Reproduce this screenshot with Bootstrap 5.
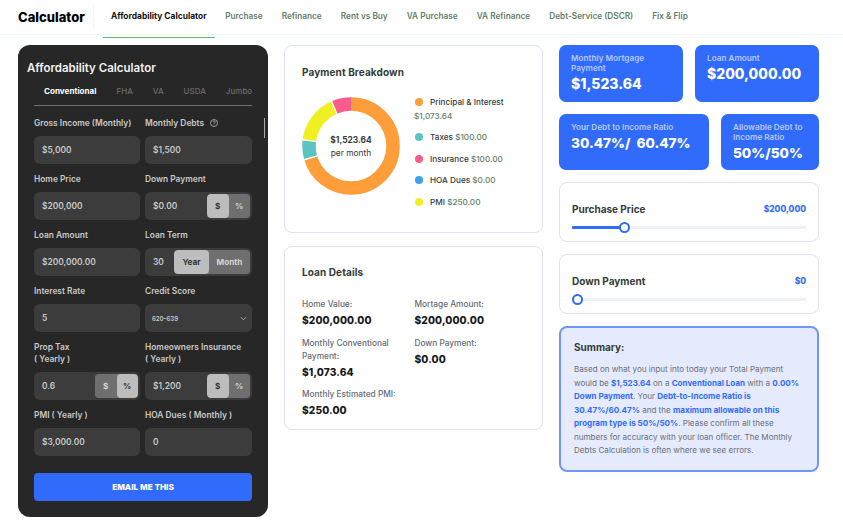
<!DOCTYPE html>
<html lang="en">
<head>
<meta charset="utf-8">
<title>Calculator</title>
<link rel="stylesheet" href="https://cdn.jsdelivr.net/npm/bootstrap@5.3.0/dist/css/bootstrap.min.css">
<style>
html,body{height:530px;overflow:hidden}
body{font-family:Inter,"Liberation Sans",sans-serif;background:#fff;color:#333c38}
.topbar{height:35px;border-bottom:1px solid #eefaf0;padding-left:18px}
.brand-name{width:75px;height:25px;margin-top:5px;font-size:13px;font-weight:800;color:#000;line-height:25px;border-right:1px solid #eefaf0;box-sizing:content-box;padding-right:0}
.tabs-top{margin-left:9px;gap:2px;flex-wrap:nowrap}
.tabs-top .nav-link{height:38px;padding:0 8.5px;line-height:33px;font-size:8.25px;font-weight:600;color:#5f8167;white-space:nowrap}
.tabs-top .nav-link.active{color:#111;font-weight:700;border-bottom:1px solid #62bd72;padding:0 8px;font-size:8.42px}
.page{padding:10px 24px 0 18px;gap:16px}
.dark-panel{width:250px;height:472px;background:#272727;border-radius:12px;padding:15px 16px 16px;color:#ddd}
.dark-title{font-size:11.5px;font-weight:600;color:#f3f3f3;line-height:17px;margin:0 0 0 -7px}
.type-tabs{height:28px;margin-top:1px;margin-bottom:11px;border-bottom:1px solid #717171;flex-wrap:nowrap;overflow:hidden;position:relative}
.type-tabs .nav-link{padding:0 10px;line-height:26px;height:27px;font-size:8px;font-weight:500;color:#6c6c6c;white-space:nowrap}
.type-tabs .nav-item:last-child .nav-link{padding-right:0}
.type-tabs .nav-link.active{color:#fff;font-weight:700;border-bottom:1px solid #316bfb;padding:0 10px;height:28px;font-size:8.1px}
.field-grid{display:grid;grid-template-columns:106px 107px;column-gap:5px;row-gap:9px}
.f-label{display:block;font-size:8.4px;line-height:12px;font-weight:600;color:#c9c9c9;margin-bottom:7px;white-space:nowrap}
.f-box{height:28px;background:#3c3c3c;border-radius:6px;padding:2px;align-items:center}
.f-box .form-control{background:transparent;border:0;box-shadow:none;color:#c9c9c9;padding:0 0 0 6px;font-size:8.4px;font-weight:600;height:24px;min-width:0;border-radius:0}
.toggles{flex:none;height:24px;border-radius:4px;overflow:hidden;background:#6f6f6f}
.toggles .btn{border:0;border-radius:4px;padding:0;height:24px;font-size:8.2px;font-weight:700;color:#d5d5d5;background:#6f6f6f;line-height:24px}
.toggles .btn.on{background:#bdbdbd;color:#333}
.tg-s{width:21.5px}
.tg-w{width:35px}
.tg-m{width:41px}
.pick{font-size:6px!important;background-color:#3c3c3c!important;border:0;box-shadow:none;color:#c9c9c9;font-weight:600;height:28px;padding:0 0 0 7px;border-radius:6px;background-position:right 5px center;background-size:7px 7px;background-image:url("data:image/svg+xml,%3csvg xmlns='http://www.w3.org/2000/svg' viewBox='0 0 16 16'%3e%3cpath fill='none' stroke='%23ddd' stroke-width='1.6' d='M2 5l6 6 6-6'/%3e%3c/svg%3e")}
.mail-btn{display:block;width:100%;height:28px;margin-top:17px;background:#316bfb;border:0;border-radius:4px;color:#fff;font-size:8.2px;font-weight:800;padding:0}
.scroll-mark{position:absolute;left:246px;top:73px;width:1px;height:20px;background:#aaa}
.mid-col{width:259px}
.soft-card{border:1px solid #dfe3f3;border-radius:8px;background:#fff}
.pay-card{height:188px;padding:19px 17px}
.details-card{height:184px;margin-top:13px;padding:18px 17px}
.card-head{font-size:10px;font-weight:700;line-height:14px;color:#333c38;letter-spacing:.1px;margin:0}
.donut-wrap{width:98px;height:98px;position:relative;margin-top:18px;flex:none}
.donut-mid{position:absolute;inset:0;text-align:center;padding-top:36.5px;font-size:8.4px;line-height:13.5px;color:#333c38}
.donut-mid b{display:block;font-weight:700}
.legend{margin:16px 0 0 15px;padding:0;list-style:none;font-size:8.2px;font-weight:500;color:#333c38}
.legend li{line-height:14px;margin-bottom:7.4px;white-space:nowrap}
.legend span{color:#5f8167}
.dot{display:inline-block;width:8px;height:8px;border-radius:50%;margin-right:7px;vertical-align:-1px}
.amount-row{display:block;margin-left:-1px;line-height:14px}
.details-grid{display:grid;grid-template-columns:112.5px 1fr;margin-top:19px;row-gap:9.5px}
.d-cap{font-size:8.3px;line-height:13px;color:#666c75;font-weight:500}
.d-val{font-size:10.2px;line-height:14px;font-weight:800;color:#18191b;margin-top:2px;letter-spacing:.1px}
.right-col{width:260px}
.blue-tile{background:#316bfb;border-radius:7px;color:#fff;padding:8px 12px;height:57px}
.blue-tile.low{height:56px}
.tile-cap{font-size:8.2px;line-height:10px;font-weight:600;color:#b4c8fd}
.tile-num{font-size:14px;line-height:18px;font-weight:800;margin-top:2px;white-space:nowrap}
.pct-num{font-size:13.6px}
.t1{width:124px}.t2{width:124px}.t3{width:150px}.t4{width:98px}
.row-two{margin-top:12px}
.slide-card{height:60px;margin-top:12px;padding:19px 12px 0 12px;position:relative}
.slide-name{font-size:10px;font-weight:700;line-height:14px;color:#333c38}
.slide-val{font-size:8.4px;font-weight:800;color:#316bfb;line-height:14px}
.rail{height:3px;background:#eef0f8;margin-top:10px;border-radius:1px;position:relative}
.rail-fill{height:3px;background:#316bfb;border-radius:1px}
.knob{position:absolute;top:-4px;width:11px;height:11px;border-radius:50%;background:#fff;border:2px solid #316bfb}
.sum-card{height:146px;margin-top:12px;background:#e5ebfd;border:2px solid #6f96fb;border-radius:8px;padding:12px 13px}
.sum-head{font-size:10px;font-weight:700;line-height:14px;color:#333c38;margin:0 0 9px}
.sum-text{font-size:8.05px;line-height:13.5px;color:#6a6f78;margin:0}
.sum-text b{color:#316bfb;font-weight:700}
</style>
</head>
<body>
<header class="topbar d-flex">
  <div class="brand-name">Calculator</div>
  <ul class="nav tabs-top">
    <li class="nav-item"><a class="nav-link active" href="#">Affordability Calculator</a></li>
    <li class="nav-item"><a class="nav-link" href="#">Purchase</a></li>
    <li class="nav-item"><a class="nav-link" href="#">Refinance</a></li>
    <li class="nav-item"><a class="nav-link" href="#">Rent vs Buy</a></li>
    <li class="nav-item"><a class="nav-link" href="#">VA Purchase</a></li>
    <li class="nav-item"><a class="nav-link" href="#">VA Refinance</a></li>
    <li class="nav-item"><a class="nav-link" href="#">Debt-Service (DSCR)</a></li>
    <li class="nav-item"><a class="nav-link" href="#">Fix &amp; Flip</a></li>
  </ul>
</header>
<main class="page d-flex align-items-start">
  <section class="dark-panel position-relative">
    <h2 class="dark-title">Affordability Calculator</h2>
    <ul class="nav type-tabs">
      <li class="nav-item"><a class="nav-link active" href="#">Conventional</a></li>
      <li class="nav-item"><a class="nav-link" href="#">FHA</a></li>
      <li class="nav-item"><a class="nav-link" href="#">VA</a></li>
      <li class="nav-item"><a class="nav-link" href="#">USDA</a></li>
      <li class="nav-item"><a class="nav-link" href="#">Jumbo</a></li>
    </ul>
    <div class="scroll-mark"></div>
    <div class="field-grid">
      <div><label class="f-label">Gross Income (Monthly)</label><div class="f-box d-flex"><input class="form-control" value="$5,000"></div></div>
      <div><label class="f-label">Monthly Debts
        <svg width="8" height="8" viewBox="0 0 16 16" class="ms-1" style="vertical-align:-1px"><circle cx="8" cy="8" r="7" fill="none" stroke="#c9c9c9" stroke-width="1.4"/><path d="M5.6 6.2a2.4 2.4 0 1 1 3.6 2.1c-.8.5-1.2.9-1.2 1.7" fill="none" stroke="#c9c9c9" stroke-width="1.4"/><circle cx="8" cy="12.2" r=".9" fill="#c9c9c9"/></svg></label><div class="f-box d-flex"><input class="form-control" value="$1,500"></div></div>
      <div><label class="f-label">Home Price</label><div class="f-box d-flex"><input class="form-control" value="$200,000"></div></div>
      <div><label class="f-label">Down Payment</label><div class="f-box d-flex"><input class="form-control" value="$0.00"><div class="toggles d-flex"><button class="btn tg-s on">$</button><button class="btn tg-s">%</button></div></div></div>
      <div><label class="f-label">Loan Amount</label><div class="f-box d-flex"><input class="form-control" value="$200,000.00"></div></div>
      <div><label class="f-label">Loan Term</label><div class="f-box d-flex"><input class="form-control" value="30"><div class="toggles d-flex"><button class="btn tg-w on">Year</button><button class="btn tg-m">Month</button></div></div></div>
      <div><label class="f-label">Interest Rate</label><div class="f-box d-flex"><input class="form-control" value="5"></div></div>
      <div><label class="f-label">Credit Score</label><select class="form-select pick"><option>620–639</option></select></div>
      <div><label class="f-label">Prop Tax<br>( Yearly )</label><div class="f-box d-flex"><input class="form-control" value="0.6"><div class="toggles d-flex"><button class="btn tg-s">$</button><button class="btn tg-s on">%</button></div></div></div>
      <div><label class="f-label">Homeowners Insurance<br>( Yearly )</label><div class="f-box d-flex"><input class="form-control" value="$1,200"><div class="toggles d-flex"><button class="btn tg-s on">$</button><button class="btn tg-s">%</button></div></div></div>
      <div><label class="f-label">PMI ( Yearly )</label><div class="f-box d-flex"><input class="form-control" value="$3,000.00"></div></div>
      <div><label class="f-label">HOA Dues ( Monthly )</label><div class="f-box d-flex"><input class="form-control" value="0"></div></div>
    </div>
    <button class="mail-btn">EMAIL ME THIS</button>
  </section>

  <section class="mid-col">
    <div class="soft-card pay-card">
      <h3 class="card-head">Payment Breakdown</h3>
      <div class="d-flex">
        <div class="donut-wrap">
          <svg width="98" height="98" viewBox="0 0 98 98">
            <g fill="none" stroke-width="13.5" transform="rotate(-90 49 49)">
              <circle cx="49" cy="49" r="42" pathLength="100" stroke="#fd9e3a" stroke-dasharray="70.46 29.54" stroke-dashoffset="0"/>
              <circle cx="49" cy="49" r="42" pathLength="100" stroke="#5bc4c0" stroke-dasharray="6.56 93.44" stroke-dashoffset="-70.46"/>
              <circle cx="49" cy="49" r="42" pathLength="100" stroke="#eef022" stroke-dasharray="16.41 83.59" stroke-dashoffset="-77.02"/>
              <circle cx="49" cy="49" r="42" pathLength="100" stroke="#fb5c8c" stroke-dasharray="6.57 93.43" stroke-dashoffset="-93.43"/>
              <g stroke="#fff">
                <circle cx="49" cy="49" r="42" pathLength="100" stroke-dasharray=".5 99.5" stroke-dashoffset="-70.2"/>
                <circle cx="49" cy="49" r="42" pathLength="100" stroke-dasharray=".5 99.5" stroke-dashoffset="-76.8"/>
                <circle cx="49" cy="49" r="42" pathLength="100" stroke-dasharray=".5 99.5" stroke-dashoffset="-93.2"/>
              </g>
            </g>
          </svg>
          <div class="donut-mid"><b>$1,523.64</b>per month</div>
        </div>
        <ul class="legend">
          <li><i class="dot" style="background:#fd9e3a"></i>Principal &amp; Interest<span class="amount-row">$1,073.64</span></li>
          <li><i class="dot" style="background:#5bc4c0"></i>Taxes <span>$100.00</span></li>
          <li><i class="dot" style="background:#fb5c8c"></i>Insurance <span>$100.00</span></li>
          <li><i class="dot" style="background:#3fa0f0"></i>HOA Dues <span>$0.00</span></li>
          <li><i class="dot" style="background:#eef022"></i>PMI <span>$250.00</span></li>
        </ul>
      </div>
    </div>
    <div class="soft-card details-card">
      <h3 class="card-head">Loan Details</h3>
      <div class="details-grid">
        <div><div class="d-cap">Home Value:</div><div class="d-val">$200,000.00</div></div>
        <div><div class="d-cap">Mortage Amount:</div><div class="d-val">$200,000.00</div></div>
        <div><div class="d-cap">Monthly Conventional<br>Payment:</div><div class="d-val">$1,073.64</div></div>
        <div><div class="d-cap">Down Payment:</div><div class="d-val">$0.00</div></div>
        <div class="text-nowrap"><div class="d-cap">Monthly Estimated PMI:</div><div class="d-val">$250.00</div></div>
      </div>
    </div>
  </section>

  <section class="right-col">
    <div class="d-flex justify-content-between">
      <div class="blue-tile t1"><div class="tile-cap">Monthly Mortgage Payment</div><div class="tile-num">$1,523.64</div></div>
      <div class="blue-tile t2"><div class="tile-cap">Loan Amount</div><div class="tile-num">$200,000.00</div></div>
    </div>
    <div class="d-flex justify-content-between row-two">
      <div class="blue-tile low t3"><div class="tile-cap">Your Debt to Income Ratio</div><div class="tile-num pct-num">30.47%/&nbsp;&nbsp;60.47%</div></div>
      <div class="blue-tile low t4"><div class="tile-cap">Allowable Debt to Income Ratio</div><div class="tile-num pct-num">50%/50%</div></div>
    </div>
    <div class="soft-card slide-card">
      <div class="d-flex justify-content-between"><span class="slide-name">Purchase Price</span><span class="slide-val">$200,000</span></div>
      <div class="rail"><div class="rail-fill" style="width:22%"></div><div class="knob" style="left:47px"></div></div>
    </div>
    <div class="soft-card slide-card">
      <div class="d-flex justify-content-between"><span class="slide-name">Down Payment</span><span class="slide-val">$0</span></div>
      <div class="rail"><div class="rail-fill" style="width:0"></div><div class="knob" style="left:0"></div></div>
    </div>
    <div class="sum-card">
      <h3 class="sum-head">Summary:</h3>
      <p class="sum-text">Based on what you input into today your Total Payment would be <b>$1,523.64</b> on a <b>Conventional Loan</b> with a <b>0.00% Down Payment</b>. Your <b>Debt-to-Income Ratio is 30.47%/60.47%</b> and the <b>maximum allowable on this program type is 50%/50%</b>. Please confirm all these numbers for accuracy with your loan officer. The Monthly Debts Calculation is often where we see errors.</p>
    </div>
  </section>
</main>
<script src="https://cdn.jsdelivr.net/npm/bootstrap@5.3.0/dist/js/bootstrap.bundle.min.js"></script>
</body>
</html>
